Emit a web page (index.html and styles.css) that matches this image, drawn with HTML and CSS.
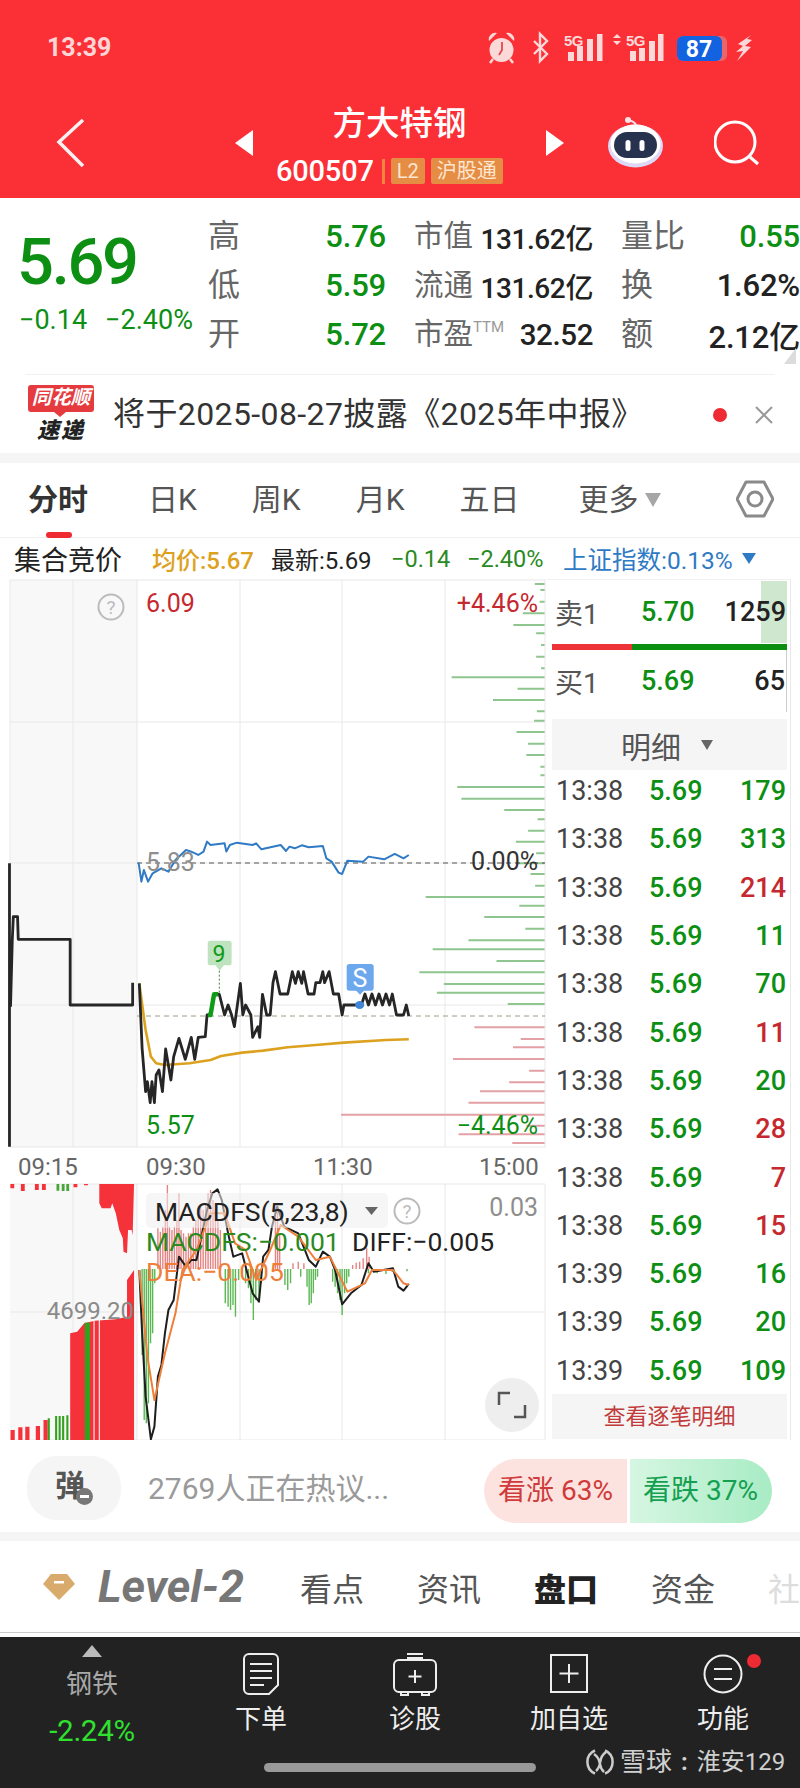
FILE: index.html
```html
<!DOCTYPE html>
<html lang="zh">
<head>
<meta charset="utf-8">
<title>方大特钢</title>
<link rel="stylesheet" href="styles.css">
</head>
<body>
<div class="app">
  <header class="hdr">
    <div class="status">
      <span class="time">13:39</span>
      <svg class="status-icons" width="280" height="94" viewBox="480 0 280 94">
        <circle cx="501.5" cy="50" r="12" fill="#fcd9d9"/>
        <path d="M489 41a6.500 6.500 0 0 1 8-8zM514 41a6.500 6.500 0 0 0-8-8z" fill="#fcd9d9"/>
        <path d="M493 59l-3 4M510 59l3 4" stroke="#fcd9d9" stroke-width="2.500"/>
        <path d="M502 42v8l-3 5" fill="none" stroke="#e2474c" stroke-width="1.800"/>
        <path d="M534 41l13 13-7 7V34l7 7-13 13" fill="none" stroke="#fcd9d9" stroke-width="2.400"/>
        <text class="sg" x="564" y="46">5G</text>
        <path d="M568 52h6v9h-6zM577 46h6v15h-6zM587 39h6v22h-6zM597 34h5.500v27h-5.500z" fill="#fcd9d9"/>
        <path d="M613 38l4-4 4 4zM613 41h8l-4 4z" fill="#fcd9d9"/>
        <text class="sg" x="626" y="46">5G</text>
        <path d="M630 51h6v10h-6zM639 48h6v13h-6zM649 41h6v20h-6zM658 34h5.500v27h-5.500z" fill="#fcd9d9"/>
        <rect x="677" y="36" width="50" height="25" rx="6" fill="#e8666b"/>
        <rect x="677" y="36" width="45" height="25" rx="6" fill="#1362e0"/>
        <text class="bat" x="699" y="56.500">87</text>
        <path d="M751 35l-13 9 5 2-7 6 7-1-6 10 14-14-6-1 7-6-5-1z" fill="#fcd9d9"/>
      </svg>
    </div>
    <div class="nav">
      <svg class="back" width="30" height="52" viewBox="0 0 30 52"><path d="M27 3L3 25l24 24" fill="none" stroke="#fdf0f0" stroke-width="3.500"/></svg>
      <span class="tri tri-l"></span>
      <div class="nav-mid">
        <div class="title">方大特钢</div>
        <div class="code-row">
          <span class="code">600507</span>
          <span class="code-div"></span>
          <span class="tag">L2</span>
          <span class="tag">沪股通</span>
        </div>
      </div>
      <span class="tri tri-r"></span>
      <svg class="robot" width="56" height="52" viewBox="0 0 56 52">
        <path d="M28 9C27 6 24 5 21 4" fill="none" stroke="#f3dfe8" stroke-width="2"/>
        <circle cx="20" cy="4" r="3" fill="#f6e6ea"/>
        <ellipse cx="27.500" cy="30" rx="27.500" ry="21.500" fill="#dcd8f6"/>
        <ellipse cx="27.500" cy="28" rx="25" ry="19.500" fill="#fff"/>
        <rect x="6" y="16" width="43" height="26" rx="13" fill="#27324f"/>
        <rect x="17.500" y="24" width="5" height="11" rx="2.500" fill="#fff"/>
        <rect x="31.500" y="24" width="5" height="11" rx="2.500" fill="#fff"/>
      </svg>
      <svg class="search" width="50" height="52" viewBox="0 0 50 52"><circle cx="21" cy="26" r="20" fill="none" stroke="#fff" stroke-width="3"/><path d="M36 41l8 7" stroke="#fff" stroke-width="3"/></svg>
    </div>
  </header>

  <section class="quote">
    <div class="q-left">
      <div class="q-price">5.69</div>
      <div class="q-change"><span>−0.14</span><span>−2.40%</span></div>
    </div>
    <div class="q-grid">
      <div class="cell"><span class="lbl-l">高</span><span class="val-g">5.76</span></div>
      <div class="cell"><span class="lbl">市值</span><span class="val-k">131.62亿</span></div>
      <div class="cell"><span class="lbl-l">量比</span><span class="val-g">0.55</span></div>
      <div class="cell"><span class="lbl-l">低</span><span class="val-g">5.59</span></div>
      <div class="cell"><span class="lbl">流通</span><span class="val-k">131.62亿</span></div>
      <div class="cell"><span class="lbl-l">换</span><span class="val-k val-b">1.62%</span></div>
      <div class="cell"><span class="lbl-l">开</span><span class="val-g">5.72</span></div>
      <div class="cell"><span class="lbl">市盈<sup class="ttm">TTM</sup></span><span class="val-k val-m">32.52</span></div>
      <div class="cell"><span class="lbl-l">额</span><span class="val-k val-b">2.12亿</span></div>
    </div>
    <span class="corner"></span>
  </section>

  <section class="notice">
    <div class="logo">
      <div class="logo-top">同花顺</div>
      <div class="logo-bot">速递</div>
    </div>
    <div class="notice-text">将于2025-08-27披露《2025年中报》</div>
    <span class="notice-dot"></span>
    <svg class="notice-x" width="18" height="18" viewBox="0 0 18 18"><path d="M1 1l16 16M17 1L1 17" stroke="#999" stroke-width="2"/></svg>
  </section>

  <div class="band band-a"></div>

  <nav class="tabs">
    <span class="tab on">分时</span>
    <span class="tab">日K</span>
    <span class="tab">周K</span>
    <span class="tab">月K</span>
    <span class="tab">五日</span>
    <span class="tab more">更多<i class="more-arrow"></i></span>
    <svg class="hex" width="38" height="40" viewBox="0 0 38 40"><path d="M10 3h18l9 17-9 17H10L1 20z" fill="none" stroke="#8a8a8a" stroke-width="3" stroke-linejoin="round"/><circle cx="19" cy="20" r="7" fill="none" stroke="#8a8a8a" stroke-width="3"/></svg>
  </nav>

  <div class="info">
    <span class="info-t">集合竞价</span>
    <span class="gold">均价:5.67</span>
    <span class="ink">最新:5.69</span>
    <span class="grn">−0.14</span>
    <span class="grn">−2.40%</span>
    <span class="blue">上证指数:0.13%</span>
    <i class="blue-arrow"></i>
  </div>

  <div class="market">
    <svg class="chart" width="547" height="861" viewBox="0 579 547 861">
      <rect x="10" y="580" width="127" height="567" fill="#f8f8f8"/>
      <rect x="10" y="1184" width="127" height="256" fill="#f8f8f8"/>
      <path class="grid" d="M10 580H545M10 722H545M10 863H545M10 1005H545M10 1147H545M10 580V1147M73 580V1147M137 580V1147M240 580V1147M342 580V1147M445 580V1147M545 580V1147"/>
      <path class="grid" d="M10 1184H545M10 1312H545M10 1440H545M73 1184V1440M137 1184V1440M240 1184V1440M342 1184V1440M445 1184V1440M545 1184V1440"/>

      <g transform="translate(0 570) scale(.3509 .3333)">
        <path class="vol-g" d="M1524 42H1552M1540 60H1552M1538 95H1552M1490 130H1552M1463 165H1552M1528 190H1552M1542 225H1552M1528 260H1552M1542 295H1552M1287 322H1552M1475 356H1552M1405 390H1552M1530 424H1552M1522 452H1552M1472 486H1552M1505 521H1552M1500 555H1552M1540 590H1552M1540 616H1552M1303 651H1552M1315 686H1552M1437 720H1552M1532 748H1552M1505 782H1552M1470 815H1552M1528 850H1552M1470 880H1552M1512 912H1552M1525 947H1552M1213 981H1552M1480 1007H1552M1380 1041H1552"/>
      </g>
      <g transform="translate(0 900) scale(.3509 .3333)">
        <path class="vol-g" d="M1497 86H1552M1335 121H1552M1233 148H1552M1415 183H1552M1195 217H1552M1265 252H1552M1245 278H1552M1447 312H1552"/>
        <path class="vol-r" d="M1352 382H1552M1484 417H1552M1462 442H1552M1291 477H1552M1508 512H1552M1451 547H1552M1368 574H1552M1335 608H1552M972 644H1552M1500 677H1552M1307 703H1552M1460 729H1552"/>
      </g>

      <path class="dash-a" d="M137 863H545"/>
      <path class="dash-b" d="M137 1016H545"/>

      <g transform="translate(0 570) scale(.3509 .3333)">
        <polyline class="ln-blue" points="395,878 403,935 410,900 422,935 435,910 460,895 480,905 500,870 530,840 545,845 565,855 580,845 590,815 600,825 640,820 645,845 655,825 675,818 720,825 730,820 745,838 800,825 815,843 825,830 840,835 860,826 880,832 920,828 930,865 945,875 965,908 975,912 990,872 1035,875 1050,860 1095,868 1125,852 1150,865 1165,855"/>
      </g>
      <g transform="translate(0 900) scale(.3509 .3333)">
        <path class="ln-blk" d="M27-110V740M30 320L35 120 38 50H50L52 118H200V315H378V248"/>
        <polyline class="ln-gold" points="397,250 415,390 430,470 445,490 470,495 540,490 600,480 630,468 690,458 750,452 820,442 900,435 980,428 1100,420 1165,418"/>
        <polyline class="ln-blk" points="397,250 405,445 415,575 420,545 428,608 433,545 440,608 445,525 453,510 463,575 472,447 487,540 495,470 510,415 520,450 528,478 545,412 555,478 565,412 585,410 590,345 600,345 610,283 625,283 640,345 650,315 660,345 668,380 685,250 692,345 700,315 715,345 720,412 735,380 740,412 748,283 760,345 770,345 778,248 785,215 798,282 820,282 833,215 842,250 850,215 860,250 865,215 878,282 895,282 900,248 912,248 920,215 925,248 938,215 950,282 965,282 975,345 980,315 1030,315 1040,282 1050,315 1060,282 1070,315 1080,282 1090,315 1100,282 1110,315 1118,282 1130,345 1150,345 1158,315 1165,348"/>
        <polyline class="ln-grn" points="592,345 600,345 610,283 622,283"/>
        <path class="dots" d="M625 212V280"/>
        <path d="M600 122h52a8 8 0 0 1 8 8v58a8 8 0 0 1-8 8h-14l-12 16-12-16h-14a8 8 0 0 1-8-8v-58a8 8 0 0 1 8-8z" fill="#bfe3bf"/>
        <path d="M996 192h61a8 8 0 0 1 8 8v64a8 8 0 0 1-8 8h-20l-11 12-11-12h-19a8 8 0 0 1-8-8v-64a8 8 0 0 1 8-8z" fill="#6ea8ec"/>
        <ellipse cx="1025" cy="315" rx="13" ry="12" fill="#3f86d8"/>
      </g>
      <text class="t-badge-g" x="219" y="962">9</text>
      <text class="t-badge-b" x="360" y="987">S</text>

      <text class="t-red" x="146" y="612">6.09</text>
      <text class="t-red t-end" x="538" y="612">+4.46%</text>
      <text class="t-gray" x="146" y="871">5.83</text>
      <text class="t-ink t-end" x="538" y="870">0.00%</text>
      <text class="t-grn" x="146" y="1134">5.57</text>
      <text class="t-grn t-end" x="538" y="1134">−4.46%</text>
      <circle cx="111" cy="607" r="12.500" fill="none" stroke="#bbb" stroke-width="2"/>
      <text class="t-q" x="111" y="614">?</text>

      <text class="t-time" x="18" y="1175">09:15</text>
      <text class="t-time" x="146" y="1175">09:30</text>
      <text class="t-time" x="313" y="1175">11:30</text>
      <text class="t-time" x="479" y="1175">15:00</text>

      <g transform="translate(0 1170) scale(.3509 .3333)">
        <path fill="#f53239" d="M283 42V100L290 115H315L320 100L330 130L340 180L350 205L352 245L362 250L365 180L375 180L378 195L382 42Z"/>
        <path fill="#f53239" d="M200 810V490L220 485L240 460L270 452L330 448L362 440V330L382 300V810Z"/>
        <path stroke="#f53239" stroke-width="11" d="M35 42V55M65 42V63M105 42V60M125 42V60M215 42V52M245 42V46"/>
        <path stroke="#4aa53a" stroke-width="8" d="M165 42V62M180 42V63M193 42V63"/>
        <path stroke="#f53239" stroke-width="12" d="M36 780V810M58 772V810M78 770V810M108 768V810M130 750V810"/>
        <path stroke="#35a01f" stroke-width="6" d="M139 745V810M160 738V810M170 738V810M180 738V810M192 736V810"/>
        <path stroke="#35a01f" stroke-width="15" d="M249 458V810"/>
        <path stroke="#fff" stroke-width="3" d="M268 452V810M283 450V810"/>

        <path stroke="#e58484" stroke-width="4" d="M450 297V175M457 297V185M464 297V170M471 297V120M477 297V45M483 297V170M490 297V180M497 297V170M504 297V150M510 297V70M516 297V180M523 297V190M530 297V200M537 297V190M544 297V190M551 297V170M558 297V150M565 297V130M572 297V110M579 297V120M586 297V100M593 297V70M600 297V60M607 297V90M614 297V120M621 297V150M628 297V180M785 297V110M791 297V120M797 297V190M835 297V280M850 297V275M866 297V280M1005 297V285M1015 297V278M1025 297V275M1035 297V265M1045 297V235M1052 297V260"/>
        <path stroke="#5cb855" stroke-width="4" d="M405 297V555M411 297V750M417 297V760M423 297V700M429 297V520M435 297V490M441 297V340M642 297V400M650 297V410M657 297V420M664 297V405M671 297V440M680 297V330M700 297V340M708 297V355M715 297V400M722 297V450M729 297V390M738 297V395M745 297V340M812 297V345M820 297V360M828 297V340M857 297V320M875 297V350M881 297V405M887 297V400M893 297V370M899 297V330M905 297V320M948 297V335M955 297V350M962 297V370M969 297V390M975 297V435M982 297V370M988 297V340M994 297V320M1160 297V304M1050 297V310M1075 297V310M1100 297V312M1118 297V306"/>
        <polyline class="ln-mk" points="397,300 405,490 415,680 430,808 440,770 450,620 460,585 470,490 480,420 495,390 510,260 530,290 545,270 560,270 590,120 605,70 620,58 632,90 650,190 665,260 690,250 720,370 738,395 750,260 765,240 775,170 790,110 810,170 850,190 880,270 900,290 920,245 940,260 955,300 975,403 1000,370 1030,345 1050,280 1065,305 1120,295 1135,350 1150,362 1165,342"/>
        <polyline class="ln-mo" points="397,300 420,560 440,690 470,550 500,430 520,300 560,240 600,130 640,130 670,220 700,240 730,330 770,240 800,165 850,200 900,270 940,260 990,365 1040,340 1060,300 1120,300 1150,340 1165,345"/>
      </g>
      <rect class="legend" x="146" y="1193" width="242" height="35" rx="5"/>
      <text class="t-leg" x="155" y="1221">MACDFS(5,23,8)</text>
      <path d="M365 1207h13l-6.500 8z" fill="#666"/>
      <circle cx="407" cy="1211" r="12.500" fill="none" stroke="#bbb" stroke-width="2"/>
      <text class="t-q" x="407" y="1218">?</text>
      <text class="t-gray t-end" x="538" y="1216">0.03</text>
      <text class="t-mg" x="146" y="1251">MACDFS:−0.001</text>
      <text class="t-leg" x="352" y="1251">DIFF:−0.005</text>
      <text class="t-mo" x="146" y="1281">DEA:−0.005</text>
      <text class="t-ax" x="134" y="1319">4699.20</text>
      <circle cx="512" cy="1405" r="27" fill="#eeeeee"/>
      <path d="M499 1405v-12h11M525 1405v12h-11" fill="none" stroke="#555" stroke-width="2.500"/>
    </svg>

    <aside class="side">
      <div class="book ask">
        <span class="ask-fill"></span>
        <span class="b-l">卖1</span><span class="b-p">5.70</span><span class="b-v">1259</span>
      </div>
      <div class="ratio"><span class="ratio-r"></span><span class="ratio-g"></span></div>
      <div class="book bid">
        <span class="b-l">买1</span><span class="b-p">5.69</span><span class="b-v">65</span>
      </div>
      <div class="detail-h">明细<i class="detail-arrow"></i></div>
      <div class="ticks">
        <div class="tick"><span>13:38</span><span class="g">5.69</span><span class="g v">179</span></div>
        <div class="tick"><span>13:38</span><span class="g">5.69</span><span class="g v">313</span></div>
        <div class="tick"><span>13:38</span><span class="g">5.69</span><span class="r v">214</span></div>
        <div class="tick"><span>13:38</span><span class="g">5.69</span><span class="g v">11</span></div>
        <div class="tick"><span>13:38</span><span class="g">5.69</span><span class="g v">70</span></div>
        <div class="tick"><span>13:38</span><span class="g">5.69</span><span class="r v">11</span></div>
        <div class="tick"><span>13:38</span><span class="g">5.69</span><span class="g v">20</span></div>
        <div class="tick"><span>13:38</span><span class="g">5.69</span><span class="r v">28</span></div>
        <div class="tick"><span>13:38</span><span class="g">5.69</span><span class="r v">7</span></div>
        <div class="tick"><span>13:38</span><span class="g">5.69</span><span class="r v">15</span></div>
        <div class="tick"><span>13:39</span><span class="g">5.69</span><span class="g v">16</span></div>
        <div class="tick"><span>13:39</span><span class="g">5.69</span><span class="g v">20</span></div>
        <div class="tick"><span>13:39</span><span class="g">5.69</span><span class="g v">109</span></div>
      </div>
      <div class="more-ticks">查看逐笔明细</div>
    </aside>
  </div>

  <section class="talk">
    <div class="danmu"><span class="danmu-t">弹</span><span class="danmu-m"></span></div>
    <div class="talk-t">2769人正在热议...</div>
    <div class="vote">
      <span class="up">看涨 63%</span>
      <span class="down">看跌 37%</span>
    </div>
  </section>

  <div class="band band-b"></div>

  <nav class="lower">
    <svg class="gem" width="32" height="26" viewBox="0 0 32 26"><path d="M8 0h16l8 10-16 16L0 10z" fill="#d8ab6c"/><rect x="11" y="7" width="10" height="2.500" fill="#fff"/></svg>
    <span class="lv2">Level-2</span>
    <div class="low-tabs">
      <span>看点</span>
      <span>资讯</span>
      <span class="low-on">盘口</span>
      <span>资金</span>
      <span class="low-fade">社</span>
    </div>
  </nav>
  <div class="lower-gap"></div>

  <footer class="foot">
    <div class="f-col f-sector">
      <i class="f-up"></i>
      <span class="f-name">钢铁</span>
      <span class="f-pct">-2.24%</span>
    </div>
    <div class="f-col">
      <svg class="f-ic" width="40" height="44" viewBox="0 0 40 44"><path d="M8 2h24a5 5 0 0 1 5 5v26l-9 9H8a5 5 0 0 1-5-5V7a5 5 0 0 1 5-5z" fill="none" stroke="#eee" stroke-width="2"/><path d="M9 12h22M9 19h22M9 26h22M9 33h14" stroke="#eee" stroke-width="2"/></svg>
      <span class="f-lab">下单</span>
    </div>
    <div class="f-col">
      <svg class="f-ic" width="46" height="44" viewBox="0 0 46 44"><path d="M15 2h16" stroke="#eee" stroke-width="2"/><rect x="2" y="8" width="42" height="32" rx="5" fill="none" stroke="#eee" stroke-width="2"/><path d="M16 8V6h14v2M23 18v13M16.500 24.500h13M9 40v3h7v-3M30 40v3h7v-3" fill="none" stroke="#eee" stroke-width="2"/></svg>
      <span class="f-lab">诊股</span>
    </div>
    <div class="f-col">
      <svg class="f-ic" width="40" height="44" viewBox="0 0 40 44"><rect x="2" y="3" width="36" height="37" fill="none" stroke="#eee" stroke-width="2"/><path d="M20 12v19M10.500 21.500h19" stroke="#eee" stroke-width="2"/></svg>
      <span class="f-lab">加自选</span>
    </div>
    <div class="f-col f-func">
      <svg class="f-ic" width="40" height="44" viewBox="0 0 40 44"><circle cx="20" cy="22" r="18.500" fill="none" stroke="#eee" stroke-width="2"/><path d="M11 17h18M11 27h18" stroke="#eee" stroke-width="2"/></svg>
      <span class="f-lab">功能</span>
      <span class="f-dot"></span>
    </div>
    <span class="home-pill"></span>
    <div class="mark">
      <svg width="28" height="30" viewBox="0 0 28 30"><path d="M9 3.500A12.500 12.500 0 0 0 9 26.500M19 3.500A12.500 12.500 0 0 1 19 26.500" fill="none" stroke="#ccc" stroke-width="2.500"/><path d="M8 7c9 6 3 12 10 18M20 5c-9 6-3 13-10 19" fill="none" stroke="#ccc" stroke-width="2.500"/></svg>
      <span class="mark-a">雪球</span><span class="mark-c">:</span><span>淮安129</span>
    </div>
  </footer>
</div>
</body>
</html>
```

FILE: styles.css
```css
* { box-sizing: border-box; }
html, body { margin: 0; padding: 0; background: #fff; }
body { font-family: Roboto, "Noto Sans CJK SC", sans-serif; }
i { display: block; font-style: normal; }

.app { width: 800px; height: 1788px; display: flex; flex-direction: column; overflow: hidden; position: relative; }

/* header */
.hdr { height: 198px; background: #fb2f36; flex: none; }
.status { height: 94px; display: flex; align-items: center; justify-content: space-between; padding: 0 40px 0 47px; }
.time { font-size: 25px; font-weight: 700; color: #fcd6d6; }
.sg { font: 700 15px "Liberation Sans", sans-serif; fill: #fcd9d9; letter-spacing: -.5px; }
.bat { font: 700 23px Roboto, sans-serif; fill: #fff; text-anchor: middle; }
.nav { height: 104px; display: flex; align-items: flex-start; padding-left: 56px; }
.back { margin-top: 23px; flex: none; }
.tri { width: 0; height: 0; margin-top: 36px; flex: none; border-top: 13.5px solid transparent; border-bottom: 13.5px solid transparent; }
.tri-l { margin-left: 149px; border-right: 18px solid #fff; }
.tri-r { border-left: 18px solid #fff; }
.nav-mid { width: 293px; flex: none; }
.title { height: 58px; padding-top: 8px; text-align: center; font-size: 33.5px; line-height: 44px; font-weight: 500; color: #fff; }
.code-row { display: flex; align-items: center; height: 38px; padding-left: 23px; }
.code { font-size: 29px; font-weight: 500; color: #fff; line-height: 38px; letter-spacing: -.2px; }
.code-div { width: 3px; height: 25px; background: #f0853f; margin: 0 6px 0 8px; }
.tag { height: 26px; line-height: 26px; padding: 0 6px; margin-right: 6px; background: #e58c45; color: #fde6cf; font-size: 20px; border-radius: 2px; }
.robot { margin: 22px 0 0 44px; flex: none; }
.search { margin: 22px 0 0 50px; flex: none; }

/* quote */
.quote { height: 177px; flex: none; display: flex; position: relative; }
.quote::after { content: ""; position: absolute; left: 25px; right: 25px; bottom: 0; border-bottom: 1px solid #f0f0f0; }
.q-left { width: 208px; flex: none; padding-left: 19px; }
.q-price { margin: 29px 0 0 -2px; font-size: 65px; line-height: 70px; letter-spacing: -2.300px; color: #0c8f13; font-weight: 500; }
.q-change { display: flex; gap: 18px; margin-top: 8px; font-size: 27px; line-height: 30px; color: #0c8f13; white-space: nowrap; }
.q-grid { display: grid; grid-template-columns: 178px 179px 179px; column-gap: 28px; grid-auto-rows: 49px; margin-top: 14px; align-content: start; }
.cell { display: flex; justify-content: space-between; align-items: center; }
.lbl-l { font-size: 32px; color: #666; line-height: 49px; }
.lbl { font-size: 29.5px; color: #666; line-height: 49px; white-space: nowrap; }
.ttm { font-size: 15px; color: #999; vertical-align: 12px; line-height: 0; }
.val-g { font-size: 31px; color: #0c8f13; font-weight: 500; letter-spacing: -.2px; }
.val-k { font-size: 28px; color: #222; white-space: nowrap; font-weight: 500; letter-spacing: -.4px; }
.val-b { font-size: 31px; letter-spacing: -.2px; }
.val-m { font-size: 29.500px; }
.corner { position: absolute; right: 4px; top: 150px; width: 0; height: 0; border-left: 12px solid transparent; border-bottom: 16px solid #dcdcdc; }

/* notice */
.notice { height: 78px; flex: none; display: flex; align-items: center; padding-left: 28px; position: relative; }
.logo { width: 66px; flex: none; text-align: center; }
.logo-top { height: 27px; line-height: 26px; background: #e53a3e; color: #fff; font-size: 19.500px; font-weight: 700; font-style: italic; border-radius: 3px; white-space: nowrap; position: relative; }
.logo-top::after { content: ""; position: absolute; left: 26px; top: 27px; width: 0; height: 0; border-left: 6px solid transparent; border-right: 6px solid transparent; border-top: 5px solid #e53a3e; }
.logo-bot { height: 26px; line-height: 26px; margin-top: 6px; font-size: 22px; font-weight: 900; font-style: italic; color: #222; letter-spacing: 2px; }
.notice-text { margin-left: 19px; font-size: 32px; color: #333; white-space: nowrap; line-height: 44px; letter-spacing: .4px; }
.notice-dot { position: absolute; left: 713px; top: 33px; width: 14px; height: 14px; border-radius: 50%; background: #ee2a33; }
.notice-x { position: absolute; left: 755px; top: 31px; }
.band { flex: none; background: #f5f5f5; }
.band-a { height: 10px; }
.band-b { height: 9px; }

/* tabs */
.tabs { height: 75px; flex: none; display: flex; align-items: center; gap: 55px; padding-left: 28px; border-bottom: 1px solid #f0f0f0; position: relative; font-size: 30px; color: #555; }
.tab { line-height: 40px; position: relative; white-space: nowrap; }
.tab.on { font-weight: 700; color: #333; margin-right: 5px; }
.tab.on::after { content: ""; position: absolute; left: 18px; top: 52px; width: 26px; height: 6px; border-radius: 3px; background: #ee2a33; }
.more { display: flex; align-items: center; margin-left: 4px; gap: 7px; }
.more-arrow { width: 0; height: 0; border-left: 8px solid transparent; border-right: 8px solid transparent; border-top: 14px solid #a6a6a6; }
.hex { position: absolute; left: 736px; top: 16px; }

/* info */
.info { height: 41px; flex: none; display: grid; grid-template-columns: 138px 119px 120px 76px 96px 179px 20px; padding-left: 14px; align-items: center; font-size: 24px; white-space: nowrap; }
.info-t { font-size: 27px; color: #222; }
.gold { color: #dca21f; font-weight: 500; }
.ink { color: #222; }
.grn { color: #2a8a1e; font-size: 23.500px; }
.blue { color: #2f7ac4; font-size: 24.500px; }
.blue-arrow { width: 0; height: 0; border-left: 7px solid transparent; border-right: 7px solid transparent; border-top: 11px solid #2f7ac4; }

/* market */
.market { height: 861px; flex: none; display: flex; }
.chart { flex: none; display: block; }
.grid { fill: none; stroke: #e8e8e8; stroke-width: 1; }
.vol-g, .vol-r { fill: none; stroke-width: 2; vector-effect: non-scaling-stroke; }
.vol-g { stroke: #8fc58f; }
.vol-r { stroke: #e3a0a5; }
.dash-a { stroke: #555; stroke-width: 1; stroke-dasharray: 5 4; }
.dash-b { stroke: #a09a8a; stroke-width: 1; stroke-dasharray: 5 4; }
.ln-blue, .ln-blk, .ln-gold, .ln-grn, .ln-mk, .ln-mo, .dots { fill: none; vector-effect: non-scaling-stroke; stroke-linejoin: round; }
.ln-blue { stroke: #2f7ac4; stroke-width: 2; }
.ln-blk { stroke: #262626; stroke-width: 2.800; }
.ln-gold { stroke: #dca21f; stroke-width: 2.600; }
.ln-grn { stroke: #0f9a18; stroke-width: 4.500; }
.ln-mk { stroke: #1e1e1e; stroke-width: 2; }
.ln-mo { stroke: #ee7f3a; stroke-width: 2; }
.dots { stroke: #4a7a4a; stroke-width: 1; stroke-dasharray: 2 2; }
.t-red, .t-grn, .t-gray, .t-ink, .t-time, .t-ax, .t-leg, .t-mg, .t-mo { font-family: Roboto, sans-serif; }
.t-red { font-size: 25px; fill: #c5282e; }
.t-grn { font-size: 25px; fill: #0c8f13; }
.t-gray { font-size: 25px; fill: #8e8e8e; }
.t-ink { font-size: 25px; fill: #333; }
.t-end { text-anchor: end; }
.t-q { font: 19px Roboto, sans-serif; fill: #bbb; text-anchor: middle; }
.t-time { font-size: 24px; fill: #666; }
.t-ax { font-size: 24px; fill: #8a8a8a; text-anchor: end; }
.t-leg { font-size: 26.500px; fill: #222; }
.t-mg { font-size: 26.500px; fill: #2a8a1e; }
.t-mo { font-size: 26.500px; fill: #ee7f3a; }
.t-badge-g { font: 23px Roboto, sans-serif; fill: #0f9a18; text-anchor: middle; }
.t-badge-b { font: 25px Roboto, sans-serif; fill: #fff; text-anchor: middle; }
.legend { fill: #efefef; fill-opacity: .55; }

/* side */
.side { width: 244px; flex: none; padding: 1px 3px 0 5px; border-top: 1px solid #f0f0f0; border-right: 1px solid #e8e8e8; display: flex; flex-direction: column; font-size: 27px; }
.book { height: 62px; display: grid; grid-template-columns: 86px 60px 1fr; align-items: center; padding-left: 3px; position: relative; }
.ask-fill { position: absolute; right: 0; top: 0; bottom: 0; width: 26px; background: #cfe6cf; }
.b-l { font-size: 28px; color: #555; position: relative; }
.b-p { color: #0c8f13; font-weight: 500; position: relative; }
.b-v { color: #222; text-align: right; position: relative; font-weight: 500; padding-right: 1px; }
.ratio { height: 6px; margin-top: 1px; display: flex; }
.ratio-r { width: 80px; background: #ee3338; }
.ratio-g { flex: 1; background: #0a8f10; }
.bid { margin-bottom: 7px; border-right: 1px solid #ccc; }
.detail-h { height: 51px; margin-bottom: -3px; background: #f5f5f5; display: flex; align-items: center; padding-left: 69px; font-size: 30px; color: #555; gap: 20px; }
.detail-arrow { width: 0; height: 0; border-left: 6.500px solid transparent; border-right: 6.500px solid transparent; border-top: 10px solid #666; }
.ticks { flex: none; position: relative; }
.tick { height: 48.300px; display: grid; grid-template-columns: 93px 60px 1fr; align-items: center; padding-left: 4px; color: #444; }
.g { color: #0c8f13; font-weight: 500; }
.r { color: #c5282e; font-weight: 500; }
.v { text-align: right; padding-right: 1px; }
.more-ticks { height: 45px; margin-top: -1px; background: #f5f5f5; text-align: center; font-size: 22px; line-height: 45px; color: #c23a3a; }

/* talk */
.talk { height: 92px; flex: none; display: flex; align-items: center; padding-left: 27px; position: relative; }
.danmu { width: 94px; height: 64px; border-radius: 30px; background: #f5f5f5; position: relative; text-align: center; flex: none; margin-top: 3px; }
.danmu-t { font-size: 30px; line-height: 60px; font-weight: 700; color: #555; margin-right: 8px; }
.danmu-m { position: absolute; left: 49px; top: 32px; width: 17px; height: 17px; border-radius: 50%; background: #777; }
.danmu-m::after { content: ""; position: absolute; left: 4px; top: 7px; width: 9px; height: 3px; background: #fff; }
.talk-t { margin-left: 27px; font-size: 30px; color: #9a9a9a; }
.vote { position: absolute; left: 484px; top: 19px; width: 288px; height: 64px; display: flex; border-radius: 32px; overflow: hidden; font-size: 28px; }
.up { width: 143px; padding-left: 14px; line-height: 64px; background: #fde3df; color: #d03a3a; white-space: nowrap; }
.down { flex: 1; margin-left: 3px; padding-left: 13px; line-height: 64px; background: linear-gradient(90deg, #d6f6e2, #a8ecc4); color: #14a050; white-space: nowrap; }

/* lower tabs */
.lower { height: 92px; flex: none; display: flex; align-items: center; padding-left: 43px; position: relative; border-bottom: 1px solid #ccc; overflow: hidden; }
.gem { flex: none; }
.lv2 { margin-left: 23px; width: 149px; flex: none; font-size: 45px; font-weight: 700; font-style: italic; color: #777; white-space: nowrap; }
.low-tabs { margin-left: 53px; display: flex; gap: 53px; font-size: 32px; color: #555; white-space: nowrap; }
.low-tabs span { position: relative; }
.low-on { font-weight: 900; color: #222; }
.low-on::after { content: ""; position: absolute; left: 14px; top: 78px; width: 46px; height: 9px; border-radius: 4px; background: #ee2a33; }
.low-fade { color: #ddd; }
.lower-gap { height: 4px; flex: none; background: #fff; }

/* footer */
.foot { flex: 1; background: #222; display: grid; grid-template-columns: 184px repeat(4, 154px); position: relative; }
.f-col { display: flex; flex-direction: column; align-items: center; position: relative; padding-top: 15px; }
.f-ic { flex: none; }
.f-lab { margin-top: 5px; font-size: 26px; line-height: 36px; color: #eee; }
.f-sector { padding-top: 8px; }
.f-up { width: 0; height: 0; border-left: 10px solid transparent; border-right: 10px solid transparent; border-bottom: 12px solid #bbb; }
.f-name { margin-top: 9px; font-size: 26px; line-height: 36px; color: #a9a9a9; }
.f-pct { margin-top: 11px; font-size: 29.500px; line-height: 36px; color: #2fe02f; letter-spacing: -.3px; }
.f-dot { position: absolute; left: 101px; top: 17px; width: 14px; height: 14px; border-radius: 50%; background: #ee2a33; }
.home-pill { position: absolute; left: 264px; top: 126px; width: 272px; height: 9px; border-radius: 5px; background: #999; }
.mark { position: absolute; left: 586px; top: 109px; display: flex; align-items: center; gap: 6px; font-size: 24px; line-height: 32px; color: #d0d0d0; white-space: nowrap; }
.mark-a { font-size: 26px; }
.mark-c { margin: 0 3px; font-weight: 700; }
```
